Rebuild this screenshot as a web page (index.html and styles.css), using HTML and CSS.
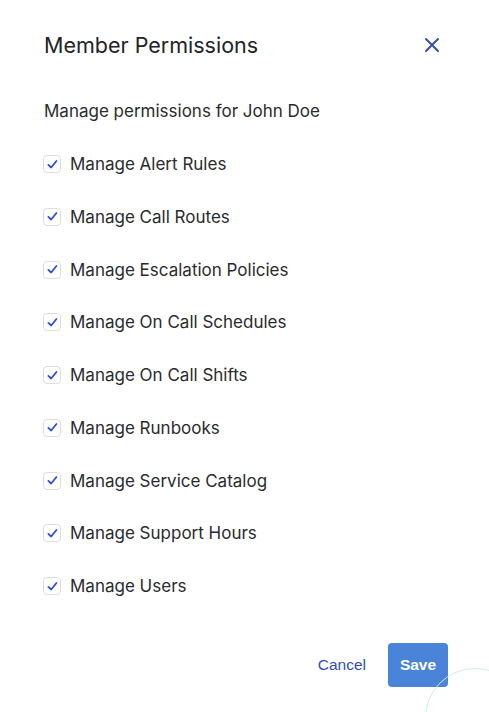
FILE: index.html
```html
<!DOCTYPE html>
<html>
<head>
<meta charset="utf-8">
<link rel="stylesheet" href="styles.css">
</head>
<body>
<div class="modal">
  <div class="header">
    <h1 class="title">Member Permissions</h1>
    <button class="close" aria-label="Close">
      <svg width="16" height="16" viewBox="0 0 16 16"><path d="M2 2L14 14M14 2L2 14" stroke="#3450b5" stroke-width="2" stroke-linecap="round"/></svg>
    </button>
  </div>
  <p class="subtitle">Manage permissions for John Doe</p>
  <ul class="list">
    <li class="item"><span class="box"><svg viewBox="0 0 16 16"><path d="M3.6 8.4L6.6 11.2L12.2 4.2" fill="none" stroke="#2c4fd0" stroke-width="1.9" stroke-linecap="round" stroke-linejoin="round"/></svg></span>Manage Alert Rules</li>
    <li class="item"><span class="box"><svg viewBox="0 0 16 16"><path d="M3.6 8.4L6.6 11.2L12.2 4.2" fill="none" stroke="#2c4fd0" stroke-width="1.9" stroke-linecap="round" stroke-linejoin="round"/></svg></span>Manage Call Routes</li>
    <li class="item"><span class="box"><svg viewBox="0 0 16 16"><path d="M3.6 8.4L6.6 11.2L12.2 4.2" fill="none" stroke="#2c4fd0" stroke-width="1.9" stroke-linecap="round" stroke-linejoin="round"/></svg></span>Manage Escalation Policies</li>
    <li class="item"><span class="box"><svg viewBox="0 0 16 16"><path d="M3.6 8.4L6.6 11.2L12.2 4.2" fill="none" stroke="#2c4fd0" stroke-width="1.9" stroke-linecap="round" stroke-linejoin="round"/></svg></span>Manage On Call Schedules</li>
    <li class="item"><span class="box"><svg viewBox="0 0 16 16"><path d="M3.6 8.4L6.6 11.2L12.2 4.2" fill="none" stroke="#2c4fd0" stroke-width="1.9" stroke-linecap="round" stroke-linejoin="round"/></svg></span>Manage On Call Shifts</li>
    <li class="item"><span class="box"><svg viewBox="0 0 16 16"><path d="M3.6 8.4L6.6 11.2L12.2 4.2" fill="none" stroke="#2c4fd0" stroke-width="1.9" stroke-linecap="round" stroke-linejoin="round"/></svg></span>Manage Runbooks</li>
    <li class="item"><span class="box"><svg viewBox="0 0 16 16"><path d="M3.6 8.4L6.6 11.2L12.2 4.2" fill="none" stroke="#2c4fd0" stroke-width="1.9" stroke-linecap="round" stroke-linejoin="round"/></svg></span>Manage Service Catalog</li>
    <li class="item"><span class="box"><svg viewBox="0 0 16 16"><path d="M3.6 8.4L6.6 11.2L12.2 4.2" fill="none" stroke="#2c4fd0" stroke-width="1.9" stroke-linecap="round" stroke-linejoin="round"/></svg></span>Manage Support Hours</li>
    <li class="item"><span class="box"><svg viewBox="0 0 16 16"><path d="M3.6 8.4L6.6 11.2L12.2 4.2" fill="none" stroke="#2c4fd0" stroke-width="1.9" stroke-linecap="round" stroke-linejoin="round"/></svg></span>Manage Users</li>
  </ul>
  <div class="footer">
    <button class="cancel">Cancel</button>
    <button class="save">Save</button>
  </div>
  <div class="ring"></div>
</div>
</body>
</html>
```
FILE: styles.css
```css
* { box-sizing: border-box; }
html, body { margin: 0; padding: 0; background: #ffffff; }
body { font-family: Inter, "Noto Sans", sans-serif; color: #222326; }
.modal {
  position: relative;
  width: 489px;
  height: 712px;
  overflow: hidden;
  background: #fff;
  border-radius: 8px;
  padding: 32px 44px 0 44px;
}
.header {
  display: flex;
  align-items: center;
  justify-content: space-between;
  height: 26px;
}
.title {
  margin: 0;
  font-size: 21.5px;
  font-weight: 400;
  color: #222326;
}
.close {
  background: none;
  border: 0;
  padding: 0;
  width: 16px;
  height: 16px;
  margin-right: 5px;
  display: flex;
}
.subtitle {
  margin: 0;
  margin-top: 42px;
  font-size: 17px;
  line-height: 22px;
  color: #2a2b2e;
}
.list {
  list-style: none;
  margin: 31px 0 0 0;
  padding: 0;
  display: flex;
  flex-direction: column;
  gap: 30.75px;
}
.item {
  display: flex;
  align-items: center;
  height: 22px;
  font-size: 17px;
  color: #2a2b2e;
}
.box {
  width: 18px;
  height: 18px;
  border: 1px solid #dcdee3;
  border-radius: 4px;
  margin-left: -1px;
  margin-right: 9px;
  display: flex;
  align-items: center;
  justify-content: center;
}
.box svg { width: 15px; height: 15px; }
.footer {
  display: flex;
  justify-content: flex-end;
  align-items: center;
  gap: 22px;
  margin-top: 46px;
}
.cancel {
  background: none;
  border: 0;
  padding: 0;
  font-family: "Liberation Sans", Arial, sans-serif;
  font-size: 15.5px;
  color: #2f4db3;
}
.save {
  width: 60px;
  height: 44px;
  background: #4a84d9;
  border: 0;
  border-radius: 4px;
  color: #fff;
  font-family: "Liberation Sans", Arial, sans-serif;
  font-weight: 700;
  font-size: 15.5px;
  margin-right: -3px;
}
.ring {
  position: absolute;
  left: 425px;
  top: 668px;
  width: 100px;
  height: 100px;
  border: 1.5px solid #cdf0e4;
  border-radius: 50%;
}
```
